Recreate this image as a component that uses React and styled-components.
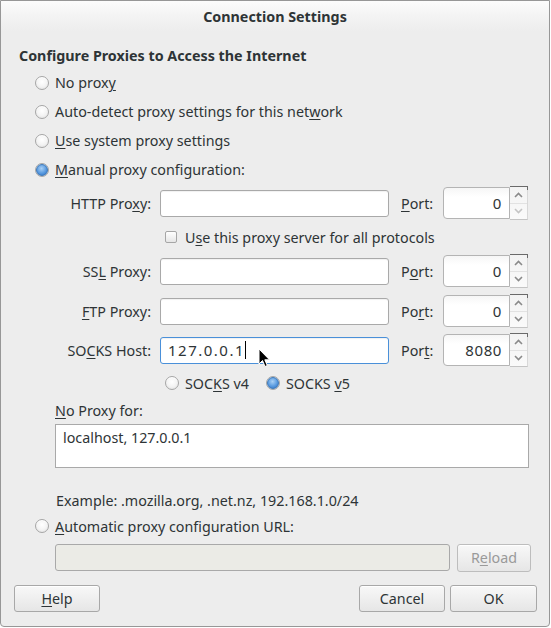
import React from 'react';
import styled, { createGlobalStyle } from 'styled-components';

const Global = createGlobalStyle`
  html, body { margin: 0; padding: 0; background: #ffffff; }
  body { font-family: "Noto Sans", "Open Sans", sans-serif; }
  * { box-sizing: border-box; }
`;

const TEXT = '#2e3436';

const Window = styled.div`
  position: relative;
  width: 550px;
  height: 627px;
  border: 1px solid #979797;
  border-radius: 0 0 4px 4px;
  background: #ededed;
  color: ${TEXT};
  font-size: 14.3px;
  display: flex;
  flex-direction: column;
  overflow: hidden;
`;

const TitleBar = styled.div`
  height: 30px;
  display: flex;
  align-items: center;
  justify-content: center;
  font-weight: bold;
  background: linear-gradient(to bottom, #fcfcfc 0%, #f4f4f4 45%, #ededed 100%);
`;

const Content = styled.div`
  padding-left: 18px;
  padding-right: 18px;
  display: flex;
  flex-direction: column;
`;

const Row = styled.div`
  display: flex;
  align-items: center;
  height: ${p => p.$h}px;
  margin-top: ${p => p.$mt || 0}px;
  padding-left: ${p => p.$indent || 0}px;
`;

const Heading = styled.div`
  font-weight: bold;
`;

const RadioCircle = styled.span`
  width: 14px;
  height: 14px;
  border-radius: 50%;
  border: 1px solid #a6a6a6;
  background: radial-gradient(circle at 50% 40%, #ffffff 0%, #f4f4f4 50%, #dedede 100%);
  display: inline-flex;
  align-items: center;
  justify-content: center;
  margin-right: 6px;
  margin-left: ${p => p.$ml || 0}px;
  flex: none;
  box-shadow: inset 0 1px 0 #fff;
  &::after {
    content: '';
    display: ${p => (p.$on ? 'block' : 'none')};
    width: 10px;
    height: 10px;
    border-radius: 50%;
    background: radial-gradient(circle at 45% 35%, #a9d0f5 0%, #5a9be0 55%, #2e6fc0 100%);
    border: 1px solid #3d78b8;
  }
`;

const CheckBox = styled.span`
  width: 12px;
  height: 12px;
  border-radius: 2px;
  border: 1px solid #a6a6a6;
  background: linear-gradient(to bottom, #ffffff, #e6e6e6);
  margin-right: 8px;
  flex: none;
`;

const Mn = styled.span`
  text-decoration: underline;
  text-underline-offset: 2px;
`;

const Label = styled.span`
  white-space: pre;
`;

const FieldLabel = styled.span`
  width: 96px;
  text-align: right;
  margin-right: 9px;
  white-space: pre;
  flex: none;
`;

const Entry = styled.div`
  width: ${p => p.$w}px;
  height: 27px;
  border: 1px solid ${p => (p.$focus ? '#4a90d9' : '#a9a9a9')};
  border-radius: 3px;
  background: ${p => (p.$disabled ? '#ebebe6' : '#ffffff')};
  box-shadow: ${p => (p.$disabled ? 'none' : 'inset 0 1px 1px rgba(0,0,0,0.06)')};
  display: flex;
  align-items: center;
  padding: 0 7px;
  font-size: 15px;
  letter-spacing: 1.5px;
  flex: none;
`;

const Caret = styled.span`
  display: inline-block;
  width: 1px;
  height: 18px;
  background: #000;
`;

const PortLabel = styled.span`
  width: 42px;
  margin-left: 12px;
  flex: none;
`;

const SpinWrap = styled.div`
  display: flex;
  align-items: center;
  height: 34px;
`;

const SpinEntry = styled.div`
  width: 67px;
  height: 32px;
  border: 1px solid #b4b4b4;
  border-radius: 4px 0 0 4px;
  background: linear-gradient(to bottom, #f6f6f6, #ffffff 30%);
  display: flex;
  align-items: center;
  justify-content: flex-end;
  padding-right: 7px;
  font-size: 15px;
  letter-spacing: 0.6px;
`;

const SpinButtons = styled.div`
  width: 18px;
  height: 34px;
  border: 1px solid #c4c4c4;
  border-top: 1px solid #6a6a6a;
  border-left: none;
  border-right: 1px solid #d8d8d8;
  background: linear-gradient(to bottom, #f3f3f3, #fafafa);
  display: flex;
  flex-direction: column;
  position: relative;
  &::before {
    content: '';
    position: absolute;
    right: -1px;
    top: -1px;
    width: 1px;
    height: 4px;
    background: #6a6a6a;
  }
`;

const SpinHalf = styled.div`
  flex: 1;
  display: flex;
  align-items: center;
  justify-content: center;
  border-top: ${p => (p.$bottom ? '1px solid #e2e2e2' : 'none')};
`;

const Chevron = ({ up, color }) => (
  <svg width="9" height="6" viewBox="0 0 9 6">
    <path
      d={up ? 'M1 5 L4.5 1.5 L8 5' : 'M1 1 L4.5 4.5 L8 1'}
      fill="none"
      stroke={color}
      strokeWidth="1.6"
    />
  </svg>
);

const Spin = ({ value, downDim }) => (
  <SpinWrap>
    <SpinEntry>{value}</SpinEntry>
    <SpinButtons>
      <SpinHalf>
        <Chevron up color="#8a8a8a" />
      </SpinHalf>
      <SpinHalf $bottom>
        <Chevron color={downDim ? '#c4c4c4' : '#8a8a8a'} />
      </SpinHalf>
    </SpinButtons>
  </SpinWrap>
);

const TextArea = styled.div`
  width: 474px;
  height: 44px;
  margin-left: 36px;
  margin-top: ${p => p.$mt}px;
  border: 1px solid #a9a9a9;
  background: #ffffff;
  padding: 3px 7px;
`;

const Button = styled.div`
  width: ${p => p.$w}px;
  height: ${p => p.$h || 27}px;
  margin-left: ${p => p.$ml || 0}px;
  border: 1px solid ${p => (p.$disabled ? '#bdbdbd' : '#a8a8a8')};
  border-radius: 3px;
  background: linear-gradient(to bottom, #f8f8f8, #e6e6e6);
  color: ${p => (p.$disabled ? '#9a9a9a' : TEXT)};
  display: flex;
  align-items: center;
  justify-content: center;
  box-shadow: inset 0 1px 0 #ffffff;
  flex: none;
`;

const Spacer = styled.div`
  flex: 1;
`;

const ButtonBar = styled.div`
  display: flex;
  align-items: center;
  margin-top: 14px;
  padding-left: 13px;
  padding-right: 12px;
`;

const Pointer = styled.svg`
  position: absolute;
  left: 257px;
  top: 347px;
`;

const ProxyRow = ({ label, mt, value, focus, port, downDim }) => (
  <Row $h={34} $mt={mt} $indent={36}>
    <FieldLabel>{label}</FieldLabel>
    <Entry $w={229} $focus={focus}>
      {value}
      {focus && <Caret />}
    </Entry>
    <PortLabel>{port.label}</PortLabel>
    <Spin value={port.value} downDim={downDim} />
  </Row>
);

export default function App() {
  return (
    <>
      <Global />
      <Window>
        <TitleBar>Connection Settings</TitleBar>
        <Content>
          <Row $h={26} $mt={11}>
            <Heading>Configure Proxies to Access the Internet</Heading>
          </Row>
          <Row $h={29} $indent={16}>
            <RadioCircle />
            <Label>No prox<Mn>y</Mn></Label>
          </Row>
          <Row $h={29} $indent={16}>
            <RadioCircle />
            <Label>Auto-detect proxy settings for this net<Mn>w</Mn>ork</Label>
          </Row>
          <Row $h={29} $indent={16}>
            <RadioCircle />
            <Label><Mn>U</Mn>se system proxy settings</Label>
          </Row>
          <Row $h={29} $indent={16}>
            <RadioCircle $on />
            <Label><Mn>M</Mn>anual proxy configuration:</Label>
          </Row>
          <ProxyRow
            mt={2}
            label={<>HTTP Pro<Mn>x</Mn>y:</>}
            port={{ label: <><Mn>P</Mn>ort:</>, value: '0' }}
            downDim
          />
          <Row $h={34} $indent={146}>
            <CheckBox />
            <Label>U<Mn>s</Mn>e this proxy server for all protocols</Label>
          </Row>
          <ProxyRow
            label={<>SS<Mn>L</Mn> Proxy:</>}
            port={{ label: <>P<Mn>o</Mn>rt:</>, value: '0' }}
          />
          <ProxyRow
            mt={6}
            label={<><Mn>F</Mn>TP Proxy:</>}
            port={{ label: <>Po<Mn>r</Mn>t:</>, value: '0' }}
          />
          <ProxyRow
            mt={5}
            label={<>SO<Mn>C</Mn>KS Host:</>}
            value="127.0.0.1"
            focus
            port={{ label: <>Por<Mn>t</Mn>:</>, value: '8080' }}
          />
          <Row $h={32} $indent={146}>
            <RadioCircle />
            <Label>SOC<Mn>K</Mn>S v4</Label>
            <RadioCircle $on $ml={17} />
            <Label>SOCKS <Mn>v</Mn>5</Label>
          </Row>
          <Row $h={22} $indent={36}>
            <Label><Mn>N</Mn>o Proxy for:</Label>
          </Row>
          <TextArea $mt={3}>localhost, 127.0.0.1</TextArea>
          <Row $h={24} $mt={20} $indent={37}>
            <Label>Example: .mozilla.org, .net.nz, 192.168.1.0/24</Label>
          </Row>
          <Row $h={28} $indent={16}>
            <RadioCircle />
            <Label><Mn>A</Mn>utomatic proxy configuration URL:</Label>
          </Row>
          <Row $h={27} $mt={4} $indent={36}>
            <Entry $w={395} $disabled />
            <Button $w={74} $h={28} $ml={7} $disabled>R<Mn>e</Mn>load</Button>
          </Row>
        </Content>
        <ButtonBar>
          <Button $w={86}><Mn>H</Mn>elp</Button>
          <Spacer />
          <Button $w={86}>Cancel</Button>
          <Button $w={87} $ml={5}>OK</Button>
        </ButtonBar>
        <Pointer width="13" height="20" viewBox="0 0 13 20">
          <path
            d="M1 1 L1 16 L4.5 12.5 L7 18.5 L9.3 17.5 L6.8 11.8 L11.5 11.8 Z"
            fill="#000"
            stroke="#fff"
            strokeWidth="1"
            strokeLinejoin="round"
          />
        </Pointer>
      </Window>
    </>
  );
}
